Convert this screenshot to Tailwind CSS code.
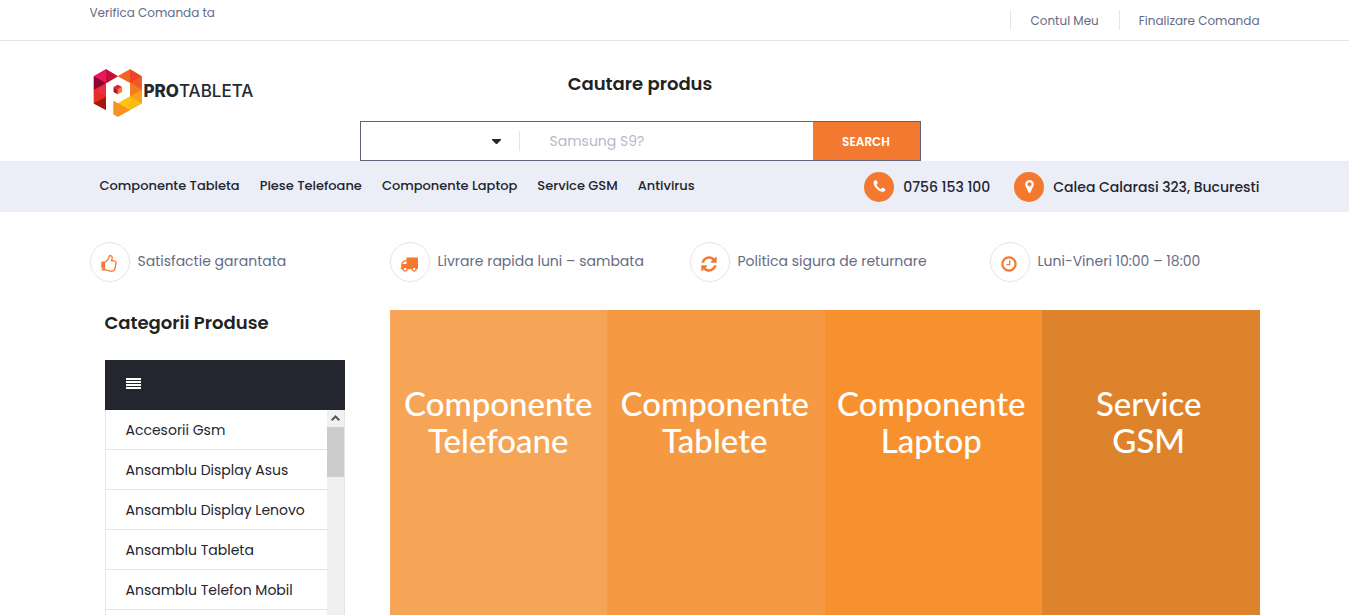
<!DOCTYPE html>
<html lang="ro">
<head>
    <meta charset="UTF-8">
    <meta name="viewport" content="width=device-width, initial-scale=1.0">
    <title>ProTableta</title>
    <script src="https://cdn.jsdelivr.net/npm/@tailwindcss/browser@4"></script>
</head>
<body class="bg-white font-[Poppins,Inter,sans-serif] text-[#23252f] overflow-x-hidden">
    <!-- Top bar -->
    <div class="border-b border-[#e5e5e5]">
        <div class="max-w-[1170px] mx-auto h-10 flex justify-between text-xs leading-5 text-[#666b82]">
            <a href="#" class="pt-[3px]">Verifica Comanda ta</a>
            <nav class="flex items-center">
                <a href="#" class="h-5 border-l border-[#e5e5e5] px-5 leading-[22px]">Contul Meu</a>
                <a href="#" class="h-5 border-l border-[#e5e5e5] pl-[19px] leading-[22px]">Finalizare Comanda</a>
            </nav>
        </div>
    </div>

    <!-- Header -->
    <header class="max-w-[1170px] mx-auto h-30 flex">
        <div class="w-[270px] pt-7">
            <a href="#" class="flex items-start pl-[3px]" aria-label="ProTableta">
                <svg class="w-[50px] h-[48px]" viewBox="39 41 149 146">
                    <path fill="#c9182c" d="M77 42l36 21-36 21v82l-37-20V63z"/>
                    <path fill="#f58220" d="M150 42l36 21v82l-73 41-13-7v-41l13 8 37-21V83l-37-20z"/>
                    <path fill="#ec1561" d="M77 42L40 63l37 21z"/>
                    <path fill="#c60d35" d="M77 42v42l36-21z"/>
                    <path fill="#8f0432" d="M40 63v42l37-21z"/>
                    <path fill="#e9303a" d="M40 105l37-21v42z"/>
                    <path fill="#e52e24" d="M40 105v41l37-20z"/>
                    <path fill="#a5180f" d="M40 146l37-20v40z"/>
                    <path fill="#f26522" d="M150 42l-37 21 37 20z"/>
                    <path fill="#ee4423" d="M150 42v41l36-20z"/>
                    <path fill="#f15a24" d="M186 63v42l-36-22z"/>
                    <path fill="#f47b20" d="M150 83v42l36-20z"/>
                    <path fill="#f9a11b" d="M186 105v40l-36-20z"/>
                    <path fill="#fdb913" d="M150 125v41l36-21z"/>
                    <path fill="#fdc60b" d="M150 125v41l-37-20z"/>
                    <path fill="#f7941e" d="M100 138l50 28-37 20-13-7z"/>
                    <path fill="#e8174b" d="M113 89l13 7-13 8-13-8z"/>
                    <path fill="#b11218" d="M100 96l13 8v14l-13-7z"/>
                    <path fill="#f58220" d="M126 96l-13 8v14l13-7z"/>
                </svg>
                <span class="pt-[10px] pl-px text-[17px] leading-6 font-[Inter,sans-serif] font-medium text-[#23292f]"><b class="font-extrabold">PRO</b>TABLETA</span>
            </a>
        </div>
        <div class="w-[561px] text-center">
            <h2 class="pt-[31px] text-lg leading-6 font-semibold text-[#222]">Cautare produs</h2>
            <form class="mt-[25px] h-10 flex items-center border border-[#5f637c]">
                <div class="w-[159px] h-5 relative border-r border-[#e5e5e5]">
                    <select aria-label="Categorie" class="w-full h-full appearance-none outline-none"><option></option></select>
                    <svg class="absolute right-[18px] top-2 w-[9px] h-[5px] pointer-events-none" viewBox="0 0 9 5" fill="#23252f"><path d="M0 0h9v1L5 5H4L0 1z"/></svg>
                </div>
                <input type="text" aria-label="Cautare produs" placeholder="Samsung S9?" class="flex-1 min-w-0 pl-[30px] text-sm outline-none placeholder:text-[#b5b8cb]">
                <button type="button" class="w-[107px] h-full pt-0.5 bg-[#f47930] text-white text-xs font-semibold">SEARCH</button>
            </form>
        </div>
    </header>

    <!-- Main menu -->
    <div class="bg-[#ebeef7]">
        <div class="max-w-[1170px] mx-auto h-[51px] flex justify-between">
            <nav class="flex gap-5 pl-[10px] pt-[15px] text-[13px] leading-5 font-medium">
                <a href="#">Componente Tableta</a>
                <a href="#">Piese Telefoane</a>
                <a href="#">Componente Laptop</a>
                <a href="#">Service GSM</a>
                <a href="#">Antivirus</a>
            </nav>
            <div class="flex items-center gap-6 text-sm font-medium">
                <div class="flex items-center gap-[9px]">
                    <span class="size-[30px] rounded-full bg-[#f47930] flex items-center justify-center">
                        <svg class="size-[15px]" viewBox="0 0 1792 1792" fill="#fff"><path d="M1600 1240q0 27-10 70.5t-21 68.5q-21 50-122 106-94 51-186 51-27 0-53-3.5t-57.5-12.5-47-14.5-55.5-20.5-49-18q-98-35-175-83-127-79-264-216t-216-264q-48-77-83-175-3-9-18-49t-20.5-55.5-14.5-47-12.5-57.5-3.5-53q0-92 51-186 56-101 106-122 25-11 68.5-21t70.5-10q14 0 21 3 18 6 53 76 11 19 30 54t35 63.5 31 53.5q3 4 17.5 25t21.5 35.5 7 28.5q0 20-28.5 50t-62 55-62 53-28.5 46q0 9 5 22.5t8.5 20.5 14 24 11.5 19q76 137 174 235t235 174q2 1 19 11.5t24 14 20.5 8.5 22.5 5q18 0 46-28.5t53-62 55-62 50-28.5q14 0 28.5 7t35.5 21.5 25 17.5q25 15 53.5 31t63.5 35 54 30q70 35 76 53 3 7 3 21z"/></svg>
                    </span>
                    <span>0756 153 100</span>
                </div>
                <div class="flex items-center gap-[9px]">
                    <span class="size-[30px] rounded-full bg-[#f47930] flex items-center justify-center">
                        <svg class="size-[15px]" viewBox="0 0 1792 1792" fill="#fff"><path d="M1152 640q0-106-75-181t-181-75-181 75-75 181 75 181 181 75 181-75 75-181zm256 0q0 109-33 179l-364 774q-16 33-47.5 52t-67.5 19-67.5-19-46.5-52l-365-774q-33-70-33-179 0-212 150-362t362-150 362 150 150 362z"/></svg>
                    </span>
                    <span>Calea Calarasi 323, Bucuresti</span>
                </div>
            </div>
        </div>
    </div>

    <!-- Benefits -->
    <ul class="max-w-[1170px] mx-auto pt-[30px] flex gap-[30px] text-sm leading-6 text-[#666b82]">
        <li class="w-[270px] flex gap-2">
            <span class="size-10 rounded-full border border-[#e5e5e5] pt-[3px] pr-px flex items-center justify-center">
                <svg class="size-[18px]" viewBox="0 0 1792 1792" fill="#f47930"><path d="M256 1344q0-26-19-45t-45-19-45 19-19 45 19 45 45 19 45-19 19-45zm1280-576q0-51-39-89.5t-89-38.5h-352q0-58 48-159.5t48-160.5q0-98-32-145t-128-47q-26 26-38 85t-30.5 125.5-59.5 109.5q-22 23-77 91-4 5-23 30t-31.5 41-34.5 42.5-40 44-38.5 35.5-40 27-35.5 9h-32v640h32q13 0 31.5 3t33 6.5 38 11 35 11.5 35.5 12.5 29 10.5q211 73 342 73h121q192 0 192-167 0-26-5-56 30-16 47.5-52.5t17.5-73.5-18-69q53-50 53-119 0-25-10-55.5t-25-47.5q32-1 53.5-47t21.5-81zm128-1q0 89-49 163 9 33 9 69 0 77-38 144 3 21 3 43 0 101-60 178 1 139-85 219.5t-227 80.5h-129q-96 0-189.5-22.5t-216.5-65.5q-116-40-138-40h-288q-53 0-90.5-37.5t-37.5-90.5v-640q0-53 37.5-90.5t90.5-37.5h274q36-24 137-155 58-75 107-128 24-25 35.5-85.5t30.5-126.5 62-108q39-37 90-37 84 0 151 32.5t102 101.5 35 186q0 93-48 192h176q104 0 180 76t76 179z"/></svg>
            </span>
            <span class="pt-[7px]">Satisfactie garantata</span>
        </li>
        <li class="w-[270px] flex gap-2">
            <span class="size-10 rounded-full border border-[#e5e5e5] pt-[3px] pr-px flex items-center justify-center">
                <svg class="size-[18px]" viewBox="0 0 1792 1792" fill="#f47930"><path d="M640 1408q0-52-38-90t-90-38-90 38-38 90 38 90 90 38 90-38 38-90zm-384-512h384v-256h-158q-13 0-22 9l-195 195q-9 9-9 22v30zm1280 512q0-52-38-90t-90-38-90 38-38 90 38 90 90 38 90-38 38-90zm256-1088v1024q0 15-4 26.5t-13.5 18.5-16.5 11.5-23.5 6-22.5 2-25.5 0-22.5-.5q0 106-75 181t-181 75-181-75-75-181h-384q0 106-75 181t-181 75-181-75-75-181h-64q-3 0-22.5.5t-25.5 0-22.5-2-23.5-6-16.5-11.5-13.5-18.5-4-26.5q0-26 19-45t45-19v-320q0-8-.5-35t0-38 2.5-34.5 6.5-37 14-30.5 22.5-30l198-198q19-19 50.5-32t58.5-13h160v-192q0-26 19-45t45-19h1024q26 0 45 19t19 45z"/></svg>
            </span>
            <span class="pt-[7px]">Livrare rapida luni – sambata</span>
        </li>
        <li class="w-[270px] flex gap-2">
            <span class="size-10 rounded-full border border-[#e5e5e5] pt-[3px] pr-px flex items-center justify-center">
                <svg class="size-[18px]" viewBox="0 0 1792 1792" fill="#f47930"><path d="M1639 1056q0 5-1 7-64 268-268 434.5t-478 166.5q-146 0-282.5-55t-243.5-157l-129 129q-19 19-45 19t-45-19-19-45v-448q0-26 19-45t45-19h448q26 0 45 19t19 45-19 45l-137 137q71 66 161 102t187 36q134 0 250-65t186-179q11-17 53-117 8-23 30-23h192q13 0 22.5 9.5t9.5 22.5zm25-800v448q0 26-19 45t-45 19h-448q-26 0-45-19t-19-45 19-45l138-138q-148-137-349-137-134 0-250 65t-186 179q-11 17-53 117-8 23-30 23h-199q-13 0-22.5-9.5t-9.5-22.5v-7q65-268 270-434.5t480-166.5q146 0 284 55.5t245 156.5l130-129q19-19 45-19t45 19 19 45z"/></svg>
            </span>
            <span class="pt-[7px]">Politica sigura de returnare</span>
        </li>
        <li class="w-[270px] flex gap-2">
            <span class="size-10 rounded-full border border-[#e5e5e5] pt-[3px] pr-px flex items-center justify-center">
                <svg class="size-[18px]" viewBox="0 0 1792 1792" fill="#f47930"><path d="M1024 544v448q0 14-9 23t-23 9h-320q-14 0-23-9t-9-23v-64q0-14 9-23t23-9h224v-352q0-14 9-23t23-9h64q14 0 23 9t9 23zm416 352q0-148-73-273t-198-198-273-73-273 73-198 198-73 273 73 273 198 198 273 73 273-73 198-198 73-273zm224 0q0 209-103 385.5t-279.5 279.5-385.5 103-385.5-103-279.5-279.5-103-385.5 103-385.5 279.5-279.5 385.5-103 385.5 103 279.5 279.5 103 385.5z"/></svg>
            </span>
            <span class="pt-[7px]">Luni-Vineri 10:00 – 18:00</span>
        </li>
    </ul>

    <!-- Categories and banner -->
    <main class="max-w-[1170px] mx-auto pt-7 flex">
        <aside class="w-[300px] pl-[15px] pr-[45px]">
            <h2 class="pt-px text-lg leading-6 font-semibold text-[#222]">Categorii Produse</h2>
            <div class="mt-[25px] h-[50px] bg-[#23252f] flex items-center pl-[21px]">
                <button type="button" aria-label="Categorii" class="pb-[3px]">
                    <svg class="block w-[15px] h-[11px]" viewBox="0 0 15 11" fill="#fff"><path d="M0 0h15v2H0zM0 3h15v2H0zM0 6h15v2H0zM0 9h15v2H0z"/></svg>
                </button>
            </div>
            <div class="h-[206px] overflow-hidden flex border-x border-[#e5e5e5]">
                <ul class="flex-1 text-sm leading-6">
                    <li class="h-10 pt-2 pl-5 border-b border-[#e5e5e5]"><a href="#">Accesorii Gsm</a></li>
                    <li class="h-10 pt-2 pl-5 border-b border-[#e5e5e5]"><a href="#">Ansamblu Display Asus</a></li>
                    <li class="h-10 pt-2 pl-5 border-b border-[#e5e5e5]"><a href="#">Ansamblu Display Lenovo</a></li>
                    <li class="h-10 pt-2 pl-5 border-b border-[#e5e5e5]"><a href="#">Ansamblu Tableta</a></li>
                    <li class="h-10 pt-2 pl-5 border-b border-[#e5e5e5]"><a href="#">Ansamblu Telefon Mobil</a></li>
                </ul>
                <!-- scrollbar -->
                <div class="w-[17px] bg-[#f0f0f0]" aria-hidden="true">
                    <div class="h-[17px] pb-0.5 flex items-center justify-center">
                        <svg class="w-[9px] h-[6px]" viewBox="0 0 9 6" fill="none" stroke="#555" stroke-width="2"><path d="M.7 5.3L4.500 1.500l3.800 3.800"/></svg>
                    </div>
                    <div class="h-[50px] bg-[#cdcdcd]"></div>
                </div>
            </div>
        </aside>
        <div class="flex-1 grid grid-cols-4 text-center text-white font-[Lato,sans-serif] font-medium text-[33px] leading-[37px]">
            <a href="#" class="pt-[75px] bg-[#f6a556]">Componente<br>Telefoane</a>
            <a href="#" class="pt-[75px] pr-0.5 bg-[#f59a43]">Componente<br>Tablete</a>
            <a href="#" class="pt-[75px] pr-1 bg-[#f7902e]">Componente<br>Laptop</a>
            <a href="#" class="pt-[75px] pr-1 bg-[#dd832c]">Service<br>GSM</a>
        </div>
    </main>
</body>
</html>
